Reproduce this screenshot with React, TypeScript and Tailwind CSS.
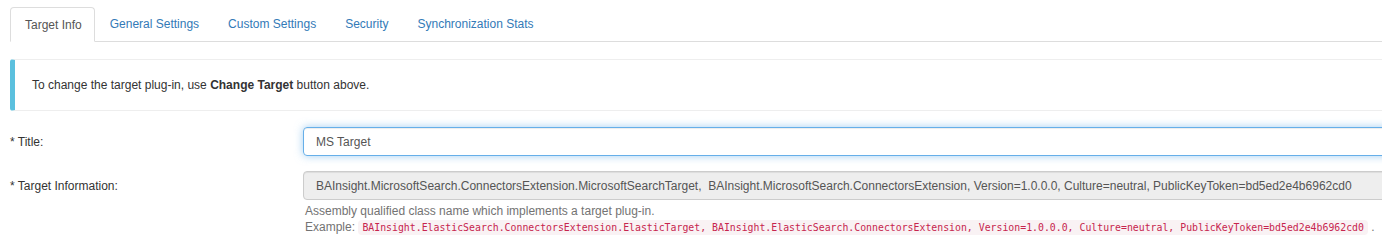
import React from "react";

const tabs = ["Target Info", "General Settings", "Custom Settings", "Security", "Synchronization Stats"];

export default function App() {
  return (
    <div className="w-[1382px] h-[250px] overflow-hidden bg-white" style={{ fontFamily: '"Liberation Sans", Arial, sans-serif' }}>
      <div className="w-[1420px] pl-[10px] pt-[7px] text-[12px] text-[#333]">
        {/* Tabs */}
        <div className="flex border-b border-[#ddd] w-[1372px]">
          {tabs.map((t, i) =>
            i === 0 ? (
              <div key={t} className="-mb-px mr-[1px] h-[35px] pl-[14px] pr-[12px] flex items-center rounded-t-[4px] border border-[#ddd] border-b-white bg-white text-[#555]">
                {t}
              </div>
            ) : (
              <div key={t} className="mr-[1px] h-[34px] px-[14px] flex items-center text-[#337ab7]">
                {t}
              </div>
            )
          )}
        </div>

        {/* Callout */}
        <div className="mt-[17px] h-[52px] flex items-center border border-[#eee] border-l-[5px] border-l-[#5bc0de] rounded-[3px] pl-[17px]">
          <span>
            To change the target plug-in, use <b className="font-bold">Change Target</b> button above.
          </span>
        </div>

        {/* Form */}
        <div className="mt-[16px] grid grid-cols-[293px_1fr] gap-y-[15px]">
          <div className="h-[29px] flex items-center">* Title:</div>
          <div className="h-[29px] flex items-center rounded-[4px] border border-[#66afe9] px-[12px] text-[#555] shadow-[inset_0_1px_1px_rgba(0,0,0,0.075),0_0_8px_rgba(102,175,233,0.6)]">
            MS Target
          </div>

          <div className="h-[29px] flex items-center">* Target Information:</div>
          <div>
            <div className="h-[29px] flex items-center rounded-[4px] border border-[#ccc] bg-[#eee] px-[12px] text-[#555] whitespace-pre shadow-[inset_0_1px_1px_rgba(0,0,0,0.075)]">
              {"BAInsight.MicrosoftSearch.ConnectorsExtension.MicrosoftSearchTarget,  BAInsight.MicrosoftSearch.ConnectorsExtension, Version=1.0.0.0, Culture=neutral, PublicKeyToken=bd5ed2e4b6962cd0"}
            </div>
            <div className="mt-[3px] pl-[2px] text-[#737373] leading-[16px]">
              <div>Assembly qualified class name which implements a target plug-in.</div>
              <div className="whitespace-nowrap">
                Example:{" "}
                <code
                  className="rounded-[4px] bg-[#f9f2f4] px-[4px] py-[2px] text-[9.85px] text-[#c7254e]"
                  style={{ fontFamily: '"DejaVu Sans Mono", "Liberation Mono", monospace' }}
                >
                  BAInsight.ElasticSearch.ConnectorsExtension.ElasticTarget, BAInsight.ElasticSearch.ConnectorsExtension, Version=1.0.0.0, Culture=neutral, PublicKeyToken=bd5ed2e4b6962cd0
                </code>{" "}
                .
              </div>
            </div>
          </div>
        </div>
      </div>
    </div>
  );
}
